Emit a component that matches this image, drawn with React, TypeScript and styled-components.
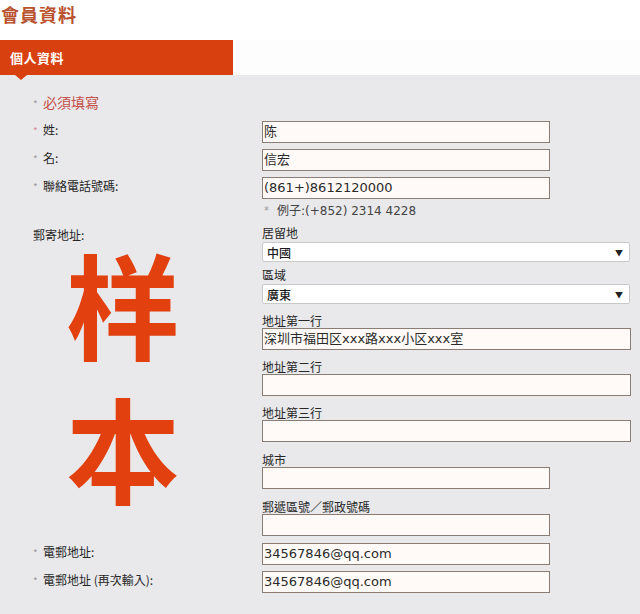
import React from "react";
import styled, { createGlobalStyle } from "styled-components";

const GlobalStyle = createGlobalStyle`
  html, body { margin: 0; padding: 0; background: #ffffff; }
  body {
    font-family: "Noto Sans CJK TC", "Noto Sans CJK SC", "DejaVu Sans", sans-serif;
    color: #333;
    width: 640px;
    height: 614px;
    overflow: hidden;
  }
  * { box-sizing: border-box; }
`;

const Page = styled.div`
  width: 640px;
  height: 614px;
  display: flex;
  flex-direction: column;
  background: #fff;
`;

const PageTitle = styled.h1`
  margin: 0;
  padding: 2px 0 0 1px;
  height: 40px;
  font-size: 18px;
  line-height: 24px;
  font-weight: 700;
  color: #b9522f;
  letter-spacing: 1px;
`;

const TabBar = styled.div`
  display: flex;
  height: 35px;
  background: #fdfdfd;
`;

const Tab = styled.div`
  position: relative;
  width: 233px;
  height: 35px;
  background: #d8400f;
  color: #fff;
  font-size: 13px;
  font-weight: 700;
  line-height: 35px;
  padding-left: 10px;
  letter-spacing: 0.5px;
  &::after {
    content: "";
    position: absolute;
    left: 15px;
    bottom: -5px;
    border-left: 6px solid transparent;
    border-right: 6px solid transparent;
    border-top: 5px solid #d8400f;
  }
`;

const Panel = styled.div`
  flex: 1;
  background: #e9e9eb;
  padding: 17px 0 0 33px;
`;

const RequiredNote = styled.div`
  display: flex;
  align-items: center;
  height: 20px;
  font-size: 14px;
  color: #c4504a;
`;

const Star = styled.span<{ $tone?: "pink" | "grey" }>`
  font-size: 10px;
  color: ${(p) => (p.$tone === "pink" ? "#d68a9a" : "#9a9a9a")};
  width: 10px;
  display: inline-block;
  line-height: 1;
  transform: translateY(2px);
`;

const Row = styled.div<{ $mt: number }>`
  display: grid;
  grid-template-columns: 229px 1fr;
  margin-top: ${(p) => p.$mt}px;
`;

const Label = styled.div`
  display: flex;
  align-items: center;
  height: 16px;
  font-size: 12px;
  color: #262626;
`;

const TextInput = styled.div<{ $wide?: boolean }>`
  width: ${(p) => (p.$wide ? "369px" : "288px")};
  height: 22px;
  border: 1px solid #8c7d74;
  background: #fffaf7;
  font-family: "DejaVu Sans", "Noto Sans CJK SC", sans-serif;
  font-size: 13px;
  line-height: 20px;
  padding-left: 1px;
  color: #2a2a2a;
  white-space: nowrap;
  overflow: hidden;
`;

const Hint = styled.div`
  display: flex;
  align-items: center;
  height: 14px;
  margin-top: 3px;
  font-size: 12px;
  color: #444;
  padding-left: 2px;
  gap: 3px;
  font-family: "DejaVu Sans", "Noto Sans CJK TC", sans-serif;
`;

const LeftCol = styled.div`
  display: flex;
  flex-direction: column;
`;

const SampleMark = styled.div<{ $mt: number }>`
  font-family: "Noto Sans CJK SC", sans-serif;
  font-weight: 700;
  font-size: 114px;
  line-height: 114px;
  height: 114px;
  color: #e2400f;
  padding-left: 33px;
  margin-top: ${(p) => p.$mt}px;
`;

const Fields = styled.div`
  display: flex;
  flex-direction: column;
`;

const FieldGroup = styled.div<{ $mb: number }>`
  display: flex;
  flex-direction: column;
  margin-bottom: ${(p) => p.$mb}px;
`;

const FieldLabel = styled.div`
  height: 14px;
  line-height: 14px;
  font-size: 12px;
  color: #262626;
`;

const Select = styled.div`
  display: flex;
  align-items: center;
  justify-content: space-between;
  width: 368px;
  height: 20px;
  margin-top: 2px;
  border: 1px solid #c9c9c9;
  border-radius: 2px;
  background: #fff;
  font-size: 12px;
  font-weight: 500;
  padding: 0 6px 0 4px;
  color: #1a1a1a;
`;

const Arrow = styled.span`
  font-size: 8px;
  color: #222;
`;

export default function App() {
  return (
    <Page>
      <GlobalStyle />
      <PageTitle>會員資料</PageTitle>
      <TabBar>
        <Tab>個人資料</Tab>
      </TabBar>
      <Panel>
        <RequiredNote>
          <Star>*</Star>必須填寫
        </RequiredNote>

        <Row $mt={9}>
          <Label><Star $tone="pink">*</Star>姓:</Label>
          <TextInput>陈</TextInput>
        </Row>
        <Row $mt={6}>
          <Label><Star>*</Star>名:</Label>
          <TextInput>信宏</TextInput>
        </Row>
        <Row $mt={6}>
          <Label><Star>*</Star>聯絡電話號碼:</Label>
          <div>
            <TextInput>(861+)8612120000</TextInput>
            <Hint><Star>*</Star> 例子:(+852) 2314 4228</Hint>
          </div>
        </Row>

        <Row $mt={10}>
          <LeftCol>
            <Label>郵寄地址:</Label>
            <SampleMark $mt={3}>样</SampleMark>
            <SampleMark $mt={30}>本</SampleMark>
          </LeftCol>
          <Fields>
            <FieldGroup $mb={6}>
              <FieldLabel>居留地</FieldLabel>
              <Select>中國<Arrow>▼</Arrow></Select>
            </FieldGroup>
            <FieldGroup $mb={10}>
              <FieldLabel>區域</FieldLabel>
              <Select>廣東<Arrow>▼</Arrow></Select>
            </FieldGroup>
            <FieldGroup $mb={10}>
              <FieldLabel>地址第一行</FieldLabel>
              <TextInput $wide>深圳市福田区xxx路xxx小区xxx室</TextInput>
            </FieldGroup>
            <FieldGroup $mb={10}>
              <FieldLabel>地址第二行</FieldLabel>
              <TextInput $wide />
            </FieldGroup>
            <FieldGroup $mb={11}>
              <FieldLabel>地址第三行</FieldLabel>
              <TextInput $wide />
            </FieldGroup>
            <FieldGroup $mb={11}>
              <FieldLabel>城市</FieldLabel>
              <TextInput />
            </FieldGroup>
            <FieldGroup $mb={0}>
              <FieldLabel>郵遞區號／郵政號碼</FieldLabel>
              <TextInput />
            </FieldGroup>
          </Fields>
        </Row>

        <Row $mt={7}>
          <Label><Star>*</Star>電郵地址:</Label>
          <TextInput>34567846@qq.com</TextInput>
        </Row>
        <Row $mt={6}>
          <Label><Star>*</Star>電郵地址 (再次輸入):</Label>
          <TextInput>34567846@qq.com</TextInput>
        </Row>
      </Panel>
    </Page>
  );
}
